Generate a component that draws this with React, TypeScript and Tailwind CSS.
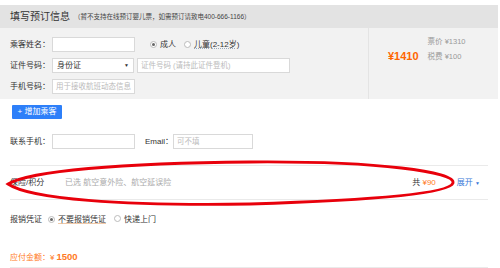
import React from 'react';

const Radio: React.FC<{ checked?: boolean }> = ({ checked }) => (
  <span className="inline-flex w-[7px] h-[7px] rounded-full border border-[#bbb] bg-white items-center justify-center">
    {checked && <span className="w-[3px] h-[3px] rounded-full bg-[#666]" />}
  </span>
);

const Input: React.FC<{ w: string; placeholder?: string }> = ({ w, placeholder }) => (
  <div className={`${w} h-[15px] bg-white border border-[#d9d9d9] flex items-center px-[3px] text-[7.5px] text-[#bbb]`}>
    {placeholder}
  </div>
);

const App: React.FC = () => {
  return (
    <div
      className="relative w-[500px] h-[268px] overflow-hidden bg-white text-[#333] text-[8px]"
      style={{ fontFamily: '"Liberation Sans", "Noto Sans CJK SC", sans-serif' }}
    >
      <div className="pt-[5px] pr-[2px]">
        {/* header */}
        <div className="h-[23px] bg-[#e3e3e3] flex items-center pl-[10px]">
          <span className="text-[10px] text-[#333]">填写预订信息</span>
          <span className="ml-[4px] text-[6.5px] text-[#444]">（暂不支持在线预订婴儿票，如需预订请致电400-666-1166）</span>
        </div>

        {/* passenger panel */}
        <div className="h-[71px] bg-[#f2f2f2] flex">
          <div className="w-[368px] pt-[6px] pl-[10px]">
            <div className="h-[21px] flex items-center">
              <span className="w-[42px]">乘客姓名：</span>
              <Input w="w-[83px]" />
              <div className="ml-[15px] flex items-center gap-[3px]">
                <Radio checked />
                <span>成人</span>
              </div>
              <div className="ml-[8px] flex items-center gap-[3px]">
                <Radio />
                <span className="underline decoration-dotted decoration-[#9ab]">儿童(2-12岁)</span>
              </div>
            </div>
            <div className="h-[21px] flex items-center">
              <span className="w-[42px]">证件号码：</span>
              <div className="w-[82px] h-[15px] bg-white border border-[#d9d9d9] flex items-center justify-between px-[4px]">
                <span>身份证</span>
                <span className="text-[5px]">▼</span>
              </div>
              <div className="ml-[3px]">
                <Input w="w-[153px]" placeholder="证件号码 (请持此证件登机)" />
              </div>
            </div>
            <div className="h-[21px] flex items-center">
              <span className="w-[42px]">手机号码：</span>
              <Input w="w-[83px]" placeholder="用于接收航班动态信息" />
            </div>
          </div>
          <div className="flex-1 border-l border-[#e4e4e4] flex items-start pt-[8px] pl-[19px]">
            <span className="mt-[12px] text-[11px] font-bold text-[#ff6600]">¥1410</span>
            <div className="ml-[9px] flex flex-col gap-[4px] text-[7.5px] text-[#999]">
              <span>票价 ¥1310</span>
              <span>税费 ¥100</span>
            </div>
          </div>
        </div>

        {/* add passenger */}
        <div className="pl-[12px] pt-[6px]">
          <button className="w-[50px] h-[14px] bg-[#2d7ff9] text-white text-[8px] flex items-center justify-center rounded-[1px]">
            + 增加乘客
          </button>
        </div>

        {/* contact */}
        <div className="pl-[10px] mt-[12px] h-[21px] flex items-center">
          <span className="w-[42px]">联系手机：</span>
          <Input w="w-[83px]" />
          <span className="ml-[10px] w-[28px]">Email：</span>
          <Input w="w-[80px]" placeholder="可不填" />
        </div>

        {/* insurance */}
        <div className="mx-[10px] mt-[13px] border-t border-b border-[#eaeaea] h-[35px] flex items-center">
          <span className="w-[55px]">保险/积分</span>
          <span className="text-[#aaa]">已选 航空意外险、航空延误险</span>
          <span className="ml-auto">共 <span className="text-[#ff7a26]">¥90</span></span>
          <span className="ml-[21px] mr-[8px] text-[#3a78d8]">展开 <span className="text-[5px]">▼</span></span>
        </div>

        {/* invoice */}
        <div className="pl-[10px] mt-[9px] h-[21px] flex items-center">
          <span className="w-[38px]">报销凭证</span>
          <Radio checked />
          <span className="ml-[3px] underline decoration-[#f0c9a8]">不要报销凭证</span>
          <span className="ml-[8px]"><Radio /></span>
          <span className="ml-[3px]">快递上门</span>
        </div>

        {/* total */}
        <div className="mx-[10px] mt-[18px] h-[20px] border-b border-[#eaeaea] flex items-center text-[#ff7a26]">
          <span>应付金额：¥ </span>
          <span className="ml-[2px] text-[9.5px] font-bold">1500</span>
        </div>
      </div>

      {/* red annotation ellipse */}
      <svg className="absolute inset-0 pointer-events-none" width="500" height="268" viewBox="0 0 500 268">
        <path
          d="M 8 184 C 30 171, 120 163, 250 162 C 380 161, 456 172, 453 183 C 450 193, 380 200, 250 204 C 120 206, 30 199, 8 184 Z"
          fill="none"
          stroke="#e8000b"
          strokeWidth="2.8"
        />
      </svg>
    </div>
  );
};

export default App;
